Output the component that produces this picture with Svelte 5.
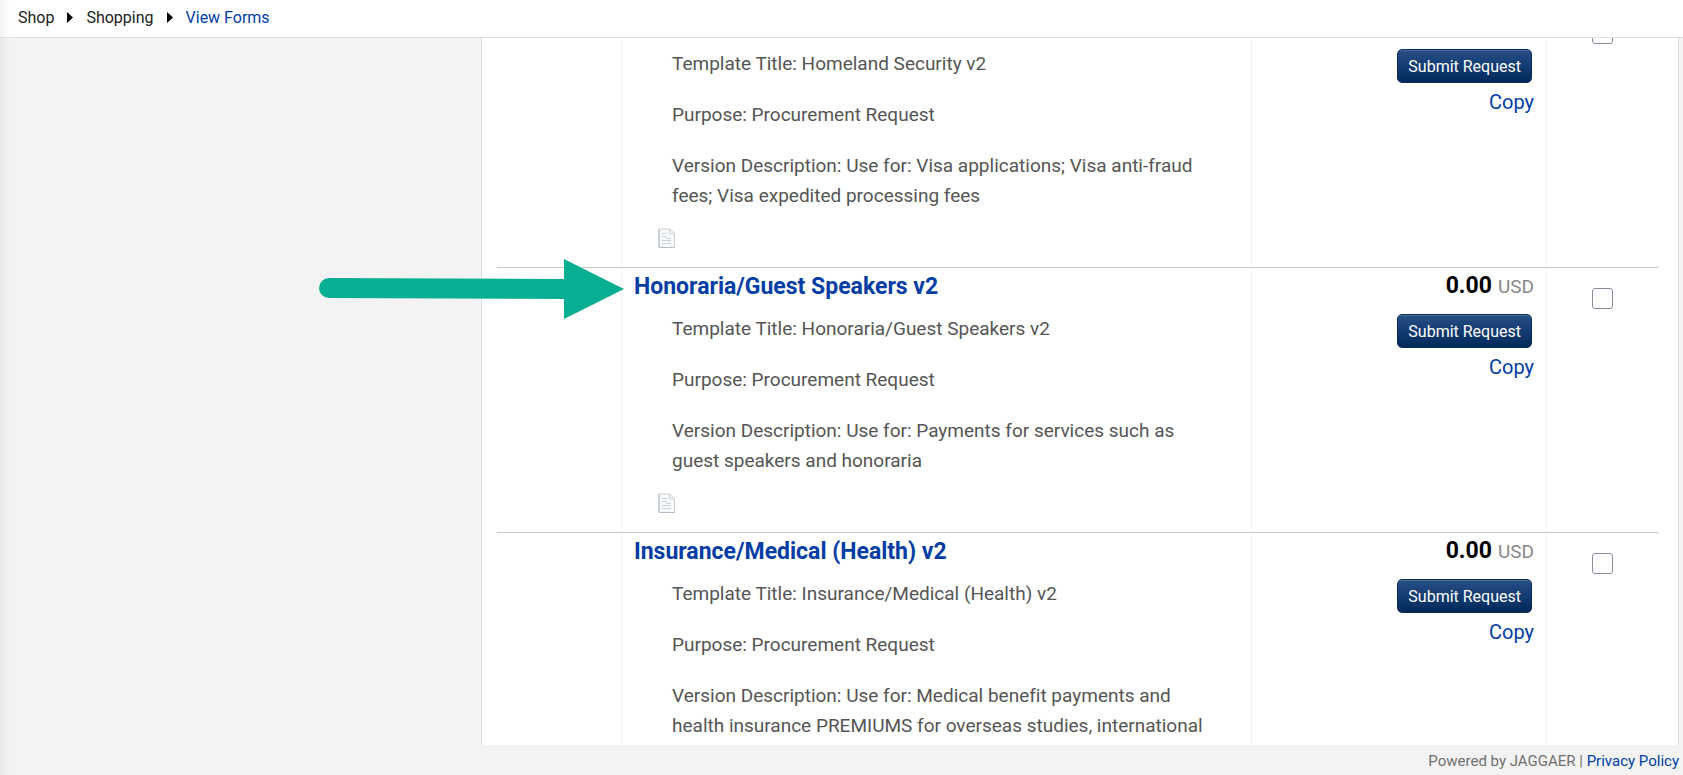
<script lang="ts">
	type Form = {
		name: string;
		description: string;
		marked?: boolean; // Draws the arrow in front of the name
	};
	const forms: Form[] = [
		{
			name: 'Homeland Security v2',
			description: 'Use for: Visa applications; Visa anti-fraud fees; Visa expedited processing fees'
		},
		{
			name: 'Honoraria/Guest Speakers v2',
			description: 'Use for: Payments for services such as guest speakers and honoraria',
			marked: true
		},
		{
			name: 'Insurance/Medical (Health) v2',
			description:
				'Use for: Medical benefit payments and health insurance PREMIUMS for overseas studies, international'
		}
	];
	let selected = $state(forms.map(() => false));
</script>

<div class="page">
	<header>
		<nav aria-label="Breadcrumb">
			<a href="#shop">Shop</a>
			<svg class="caret" viewBox="0 0 6 11" aria-hidden="true"><path d="M0 0L6 5.5L0 11Z" /></svg>
			<a href="#shopping">Shopping</a>
			<svg class="caret" viewBox="0 0 6 11" aria-hidden="true"><path d="M0 0L6 5.5L0 11Z" /></svg>
			<a class="current" href="#forms">View Forms</a>
		</nav>
	</header>

	<main>
		<aside></aside>
		<section class="panel">
			<!-- The list is scrolled a little, the first row sits partly under the header -->
			<table>
				<colgroup>
					<col class="col-image" />
					<col />
					<col class="col-price" />
					<col class="col-check" />
				</colgroup>
				<tbody>
					{#each forms as form, i}
						<tr>
							<td></td>
							<td class="info">
								{#if form.marked}
									<svg class="arrow" viewBox="0 0 305 60" aria-hidden="true">
										<path d="M10 19L245 20V0L305 30L245 60V40L10 39A10 10 0 0 1 10 19Z" />
									</svg>
								{/if}
								<a class="name" href="#form-{i}">{form.name}</a>
								<div class="details">
									<p>Template Title: {form.name}</p>
									<p>Purpose: Procurement Request</p>
									<p>Version Description: {form.description}</p>
								</div>
								<svg class="doc" viewBox="0 0 18 21" aria-hidden="true">
									<path d="M1 1H12L16.500 5.500V19.500H1Z" fill="#f8f9fa" stroke="#ccd0d5" />
									<path d="M1 1V19.500H16.500" fill="none" stroke="#b5bdc8" />
									<path d="M11.500 1V6H16.500" fill="#eceef0" stroke="#d3d6da" />
									<path
										d="M4 5.500H9M4 8.500H9M8 10.500H13M4 12.500H13M4 15.500H13"
										stroke="#cdd0d4"
									/>
								</svg>
							</td>
							<td class="price">
								<div class="amount"><b>0.00</b><span>USD</span></div>
								<button type="button">Submit Request</button>
								<a class="copy" href="#copy-{i}">Copy</a>
							</td>
							<td class="check">
								<input type="checkbox" aria-label={form.name} bind:checked={selected[i]} />
							</td>
						</tr>
					{/each}
				</tbody>
			</table>
		</section>
	</main>

	<footer>Powered by JAGGAER | <a href="#privacy">Privacy Policy</a></footer>
</div>

<style>
	:global(body) {
		margin: 0;
		background: #f3f3f3;
	}
	.page {
		display: flex;
		flex-direction: column;
		height: 100vh;
		overflow: hidden;
		font-family: Roboto, 'Liberation Sans', sans-serif;
		color: #555;
		/* soft shade along the left edge */
		background: linear-gradient(to right, #e8e8e8, #f3f3f3 10px);
	}
	a {
		color: #003da5;
		text-decoration: none;
	}

	/* Breadcrumb */
	header {
		border-bottom: 1px solid #dedede;
		background: linear-gradient(to right, #f3f3f3, #fff 10px);
	}
	nav {
		display: flex;
		align-items: center;
		height: 35px;
		padding: 0 18px 2px;
		gap: 13px;
		font-size: 16px;
		line-height: 35px;
	}
	nav a {
		color: #222;
	}
	nav .current {
		color: #003da5;
	}
	.caret {
		width: 6px;
		height: 11px;
		fill: #000;
	}

	/* Form list */
	main {
		display: flex;
		flex: 1;
		min-height: 0;
		overflow: hidden;
	}
	aside {
		flex: 0 0 481px;
	}
	.panel {
		flex: 1;
		margin-right: 4px;
		padding: 0 19px 0 15px;
		border: solid #dcdcdc;
		border-width: 0 1px;
		background: #fff;
	}
	table {
		width: 100%;
		margin-top: -36px;
		table-layout: fixed;
		border-collapse: separate;
		border-spacing: 0;
	}
	.col-image {
		width: 125px;
	}
	.col-price {
		width: 295px;
	}
	.col-check {
		width: 112px;
	}
	td {
		height: 265px;
		box-sizing: border-box;
		padding: 0;
		vertical-align: top;
		border-top: 1px solid #c8c8c8;
	}
	td:not(:last-child) {
		border-right: 1px solid #f3f3f3;
	}
	.info {
		position: relative;
		padding: 4px 30px 0 12px;
	}
	.name {
		display: block;
		font-size: 23px;
		font-weight: 700;
		line-height: 30px;
	}
	.details {
		padding: 12px 0 17px 38px;
		font-size: 19px;
		line-height: 30px;
		font-variant-ligatures: none;
	}
	.details p {
		margin: 0;
	}
	.details p + p {
		margin-top: 21px;
	}
	.doc {
		display: block;
		width: 18px;
		height: 21px;
		margin-left: 24px;
	}
	.arrow {
		position: absolute;
		top: -9px;
		right: calc(100% - 2px);
		width: 305px;
		height: 60px;
		fill: #08af92;
	}
	.price {
		padding: 3px 12px 0 0;
		text-align: right;
	}
	.amount {
		font-size: 19px;
		line-height: 30px;
		color: #888;
	}
	.amount b {
		margin-right: 6px;
		font-size: 23px;
		color: #000;
	}
	button {
		display: block;
		height: 34px;
		margin: 12px 2px 4px auto;
		padding: 0 10px;
		border: 1px solid #0b2a55;
		border-radius: 5px;
		background: linear-gradient(#274f87, #00295b);
		box-shadow: inset 0 1px 0 #4a6b9b;
		color: #fff;
		font: 16px Roboto, 'Liberation Sans', sans-serif;
	}
	.copy {
		font-size: 20px;
		line-height: 30px;
	}
	.check {
		padding: 20px 0 0 45px;
	}
	.check input {
		appearance: none;
		display: block;
		width: 21px;
		height: 21px;
		margin: 0;
		border: 1px solid #8a8a9a;
		border-radius: 3px;
		background: #fff;
	}
	.check input:checked {
		background: #003da5;
	}

	footer {
		padding: 3px 4px 0 0;
		font-size: 15px;
		line-height: 27px;
		text-align: right;
		color: #707070;
	}
</style>
